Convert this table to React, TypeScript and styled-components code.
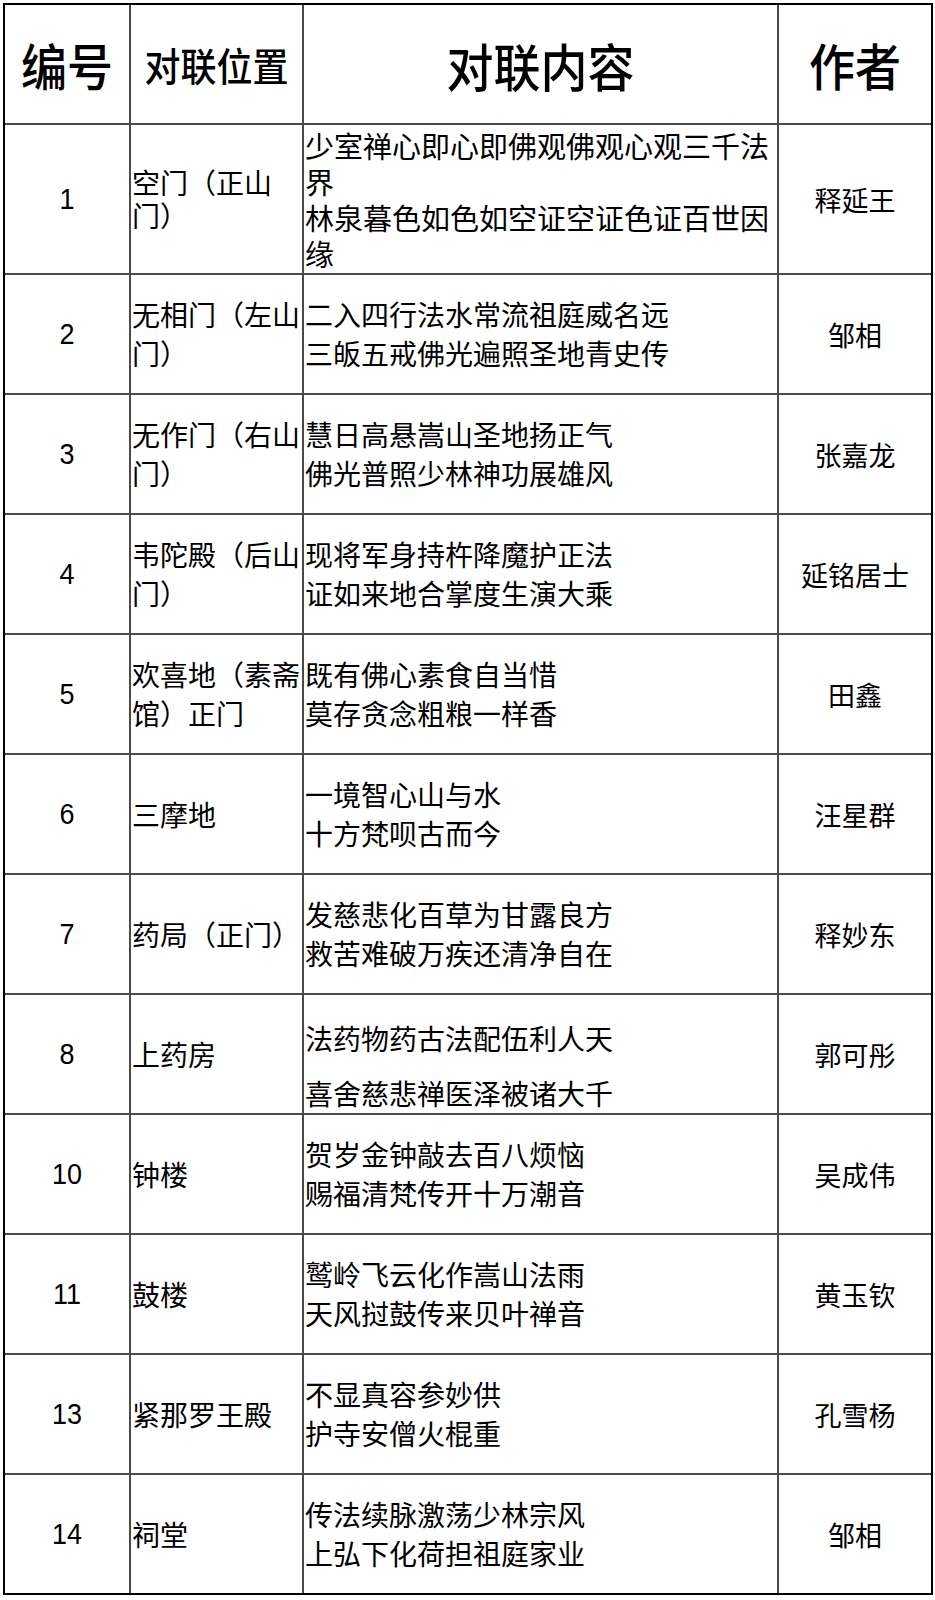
import * as React from 'react';
import styled, { createGlobalStyle } from 'styled-components';

const GlobalStyle = createGlobalStyle`
    html, body {
        margin: 0;
        padding: 0;
        background: #fff;
    }
    body {
        font-family: "Noto Sans CJK SC", "Noto Sans", sans-serif;
        color: #000;
    }
`;

const Sheet = styled.div`
    display: grid;
    grid-template-columns: 126px 173px 475px 152px;
    width: fit-content;
    margin: 3px 0 0 3px;
    border: 2px solid #000;
`;

const Cell = styled.div<{ $h: number; $align: 'center' | 'left'; $last?: boolean; $end?: boolean }>`
    box-sizing: border-box;
    height: ${(p) => p.$h}px;
    display: flex;
    align-items: center;
    justify-content: ${(p) => (p.$align === 'center' ? 'center' : 'flex-start')};
    border-right: ${(p) => (p.$end ? 'none' : '2px solid #4a4a4a')};
    border-bottom: ${(p) => (p.$last ? 'none' : '2px solid #4a4a4a')};
    padding-left: ${(p) => (p.$align === 'left' ? '1px' : '0')};
    overflow: hidden;
`;

const HeadText = styled.span<{ $size: number }>`
    font-family: "Noto Sans CJK SC", sans-serif;
    font-size: ${(p) => p.$size}px;
    font-weight: 500;
    line-height: 1;
    white-space: nowrap;
    transform: scaleY(1.08);
`;

const Num = styled.span`
    font-family: "Liberation Sans", Arial, sans-serif;
    font-size: 27px;
    line-height: 1;
    transform: scaleY(1.06);
`;

const Lines = styled.div<{ $lh: number; $size: number; $shift?: number }>`
    font-family: "Noto Sans CJK SC", sans-serif;
    font-size: ${(p) => p.$size}px;
    line-height: ${(p) => p.$lh}px;
    white-space: nowrap;
    padding-top: ${(p) => p.$shift || 0}px;
`;

const Author = styled.span`
    font-family: "Noto Sans CJK SC", sans-serif;
    font-size: 27px;
    line-height: 1;
    white-space: nowrap;
`;

type Row = {
    no: string;
    place: string[];
    text: string[];
    author: string;
    h?: number;
    placeLh?: number;
    textLh?: number;
    textSize?: number;
    shift?: number;
};

const rows: Row[] = [
    {
        no: '1',
        place: ['空门（正山', '门）'],
        text: ['少室禅心即心即佛观佛观心观三千法', '界', '林泉暮色如色如空证空证色证百世因', '缘'],
        author: '释延王',
        h: 150,
        placeLh: 33,
        textLh: 36,
        textSize: 29,
    },
    { no: '2', place: ['无相门（左山', '门）'], text: ['二入四行法水常流祖庭威名远', '三皈五戒佛光遍照圣地青史传'], author: '邹相' },
    { no: '3', place: ['无作门（右山', '门）'], text: ['慧日高悬嵩山圣地扬正气', '佛光普照少林神功展雄风'], author: '张嘉龙' },
    { no: '4', place: ['韦陀殿（后山', '门）'], text: ['现将军身持杵降魔护正法', '证如来地合掌度生演大乘'], author: '延铭居士' },
    { no: '5', place: ['欢喜地（素斋', '馆）正门'], text: ['既有佛心素食自当惜', '莫存贪念粗粮一样香'], author: '田鑫' },
    { no: '6', place: ['三摩地'], text: ['一境智心山与水', '十方梵呗古而今'], author: '汪星群' },
    { no: '7', place: ['药局（正门）'], text: ['发慈悲化百草为甘露良方', '救苦难破万疾还清净自在'], author: '释妙东' },
    {
        no: '8',
        place: ['上药房'],
        text: ['法药物药古法配伍利人天', '喜舍慈悲禅医泽被诸大千'],
        author: '郭可彤',
        textLh: 55,
        shift: 23,
    },
    { no: '10', place: ['钟楼'], text: ['贺岁金钟敲去百八烦恼', '赐福清梵传开十万潮音'], author: '吴成伟' },
    { no: '11', place: ['鼓楼'], text: ['鹫岭飞云化作嵩山法雨', '天风挝鼓传来贝叶禅音'], author: '黄玉钦' },
    { no: '13', place: ['紧那罗王殿'], text: ['不显真容参妙供', '护寺安僧火棍重'], author: '孔雪杨' },
    { no: '14', place: ['祠堂'], text: ['传法续脉激荡少林宗风', '上弘下化荷担祖庭家业'], author: '邹相' },
];

export default function App(): JSX.Element {
    return (
        <>
            <GlobalStyle />
            <Sheet>
                <Cell $h={120} $align="center">
                    <HeadText $size={46}>编号</HeadText>
                </Cell>
                <Cell $h={120} $align="center">
                    <HeadText $size={36}>对联位置</HeadText>
                </Cell>
                <Cell $h={120} $align="center">
                    <HeadText $size={47}>对联内容</HeadText>
                </Cell>
                <Cell $h={120} $align="center" $end>
                    <HeadText $size={46}>作者</HeadText>
                </Cell>
                {rows.map((row, i) => {
                    const last = i === rows.length - 1;
                    const h = row.h || (last ? 118 : 120);
                    return (
                        <React.Fragment key={row.no}>
                            <Cell $h={h} $align="center" $last={last}>
                                <Num>{row.no}</Num>
                            </Cell>
                            <Cell $h={h} $align="left" $last={last}>
                                <Lines $size={28} $lh={row.placeLh || 39}>
                                    {row.place.map((line) => (
                                        <div key={line}>{line}</div>
                                    ))}
                                </Lines>
                            </Cell>
                            <Cell $h={h} $align="left" $last={last}>
                                <Lines $size={row.textSize || 28} $lh={row.textLh || 39} $shift={row.shift}>
                                    {row.text.map((line) => (
                                        <div key={line}>{line}</div>
                                    ))}
                                </Lines>
                            </Cell>
                            <Cell $h={h} $align="center" $last={last} $end>
                                <Author>{row.author}</Author>
                            </Cell>
                        </React.Fragment>
                    );
                })}
            </Sheet>
        </>
    );
}
